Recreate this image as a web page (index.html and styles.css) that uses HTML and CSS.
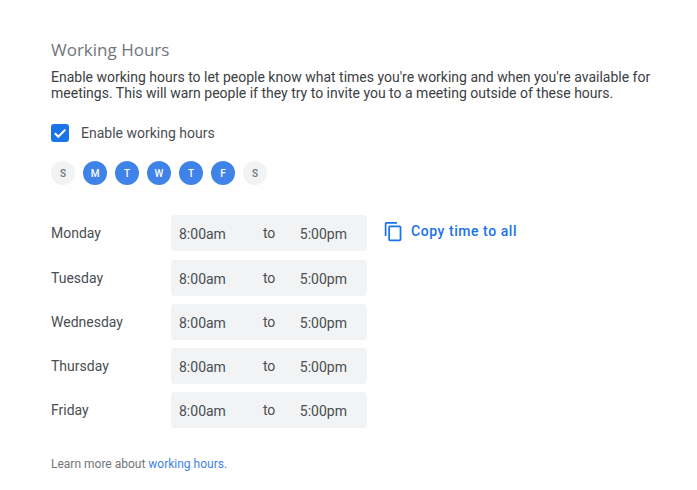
FILE: index.html
```html
<!DOCTYPE html>
<html lang="en">

<head>
    <meta charset="UTF-8">
    <title>Working Hours</title>
    <link rel="stylesheet" href="styles.css">
</head>

<body>
    <div class="container">
        <h2>Working Hours</h2>
        <p class="intro">Enable working hours to let people know what times you're working and when you're available for meetings. This will warn people if they try to invite you to a meeting outside of these hours.</p>

        <!-- Checkbox -->
        <div class="enable-row">
            <span class="checkbox">
                <svg width="18" height="18" viewBox="0 0 18 18"><path d="M3.800 9.300l3.500 3.500 7-7.200" fill="none" stroke="#fff" stroke-width="2"/></svg>
            </span>
            <span>Enable working hours</span>
        </div>

        <!-- Days -->
        <div class="days">
            <span class="day">S</span>
            <span class="day on">M</span>
            <span class="day on">T</span>
            <span class="day on">W</span>
            <span class="day on">T</span>
            <span class="day on">F</span>
            <span class="day">S</span>
        </div>

        <!-- Hours -->
        <div class="hours">
            <div class="row first">
                <span class="name">Monday</span>
                <div class="times"><span class="time">8:00am</span><span class="to">to</span><span class="time">5:00pm</span></div>
                <a class="copy">
                    <svg width="21" height="21" viewBox="0 0 24 24"><path fill="#1a73e8" d="M16 1H4c-1.100 0-2 .9-2 2v14h2V3h12V1zm3 4H8c-1.100 0-2 .9-2 2v14c0 1.100.9 2 2 2h11c1.100 0 2-.9 2-2V7c0-1.100-.9-2-2-2zm0 16H8V7h11v14z"/></svg>
                    <span>Copy time to all</span>
                </a>
            </div>
            <div class="row">
                <span class="name">Tuesday</span>
                <div class="times"><span class="time">8:00am</span><span class="to">to</span><span class="time">5:00pm</span></div>
            </div>
            <div class="row">
                <span class="name">Wednesday</span>
                <div class="times"><span class="time">8:00am</span><span class="to">to</span><span class="time">5:00pm</span></div>
            </div>
            <div class="row">
                <span class="name">Thursday</span>
                <div class="times"><span class="time">8:00am</span><span class="to">to</span><span class="time">5:00pm</span></div>
            </div>
            <div class="row">
                <span class="name">Friday</span>
                <div class="times"><span class="time">8:00am</span><span class="to">to</span><span class="time">5:00pm</span></div>
            </div>
        </div>

        <p class="learn">Learn more about <a href="#">working hours</a>.</p>
    </div>
</body>

</html>
```

FILE: styles.css
```css
body {
    margin: 0;
    background: #FFFFFF;
    color: #4A4E52;
    font-family: 'Roboto', sans-serif;
    font-size: 14px;
}

.container {
    padding: 39px 40px 0 51px;
}

h2 {
    margin: 0;
    font-family: 'Open Sans', sans-serif;
    font-size: 17px;
    line-height: 22px;
    font-weight: 400;
    color: #70757A;
}

.intro {
    margin: 8px 0 0;
    line-height: 16px;
    color: #3C4043;
}

/* Checkbox row */
.enable-row {
    display: flex;
    align-items: center;
    gap: 12px;
    margin-top: 23px;
    height: 18px;
}

.checkbox {
    width: 18px;
    height: 18px;
    border-radius: 3px;
    background: #1A73E8;
}

.checkbox svg {
    display: block;
}

/* Day circles */
.days {
    display: flex;
    gap: 8px;
    margin-top: 19px;
}

.day {
    width: 24px;
    height: 24px;
    border-radius: 50%;
    background: #F1F3F4;
    color: #70757A;
    font-size: 10px;
    font-weight: 500;
    display: flex;
    align-items: center;
    justify-content: center;
}

.day.on {
    background: #3F83E8;
    color: #FFFFFF;
}

/* Hours table */
.hours {
    display: flex;
    flex-direction: column;
    gap: 8px;
    margin-top: 30px;
}

.row {
    display: flex;
    align-items: center;
}

.row.first {
    margin-bottom: 1px;
}

.name {
    width: 120px;
}

.times {
    width: 196px;
    height: 36px;
    box-sizing: border-box;
    padding: 0 8px;
    background: #F1F3F4;
    border-radius: 4px;
    display: flex;
    align-items: center;
}

.time {
    margin-top: 1px;
}

.to {
    margin: 0 24.500px 0 37px;
}

.copy {
    display: flex;
    align-items: center;
    gap: 7px;
    margin: -4px 0 0 16px;
    color: #1A73E8;
    font-weight: 500;
    letter-spacing: 0.55px;
}

.learn {
    margin: 28px 0 0;
    font-size: 12px;
    line-height: 16px;
    color: #70757A;
}

.learn a {
    color: #3F83E8;
    text-decoration: none;
}
```
